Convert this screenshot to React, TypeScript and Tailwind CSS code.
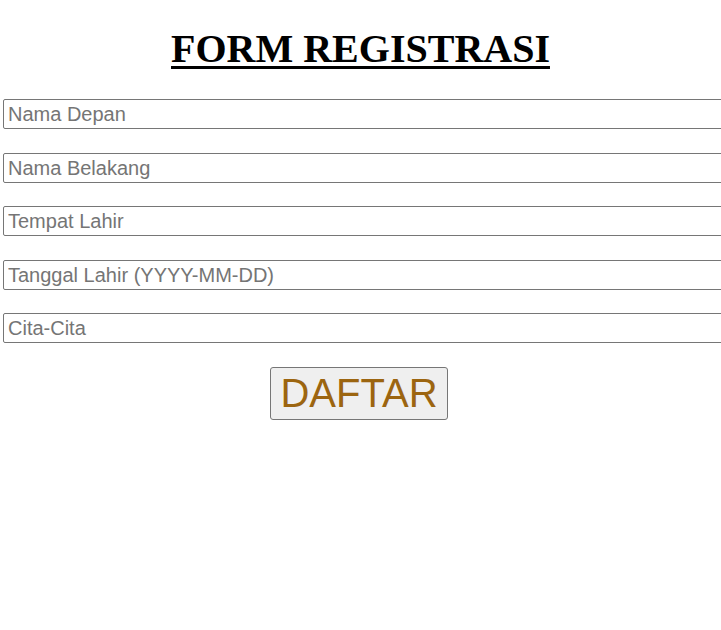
import React from "react";

export default function App() {
    const fields = ["Nama Depan", "Nama Belakang", "Tempat Lahir", "Tanggal Lahir (YYYY-MM-DD)", "Cita-Cita"];
    return (
        <main className="w-[721px] h-[630px] overflow-hidden bg-white" style={{fontFamily: '"Liberation Sans", Arial, sans-serif'}}>
            <h1 className="text-center pt-[26px] text-[40px] leading-[46px] font-bold underline decoration-[3px] underline-offset-[4px] text-black"
                style={{fontFamily: '"Liberation Serif", "Times New Roman", serif'}}>
                FORM REGISTRASI
            </h1>
            <form className="mt-[27px] flex flex-col gap-[23.5px]" onSubmit={e => e.preventDefault()}>
                {fields.map(f => (
                    <input key={f} type="text" placeholder={f}
                           className="ml-[3px] w-[760px] h-[30px] border border-[#767676] rounded-[2px] px-[4px] text-[20px] text-black placeholder:text-[#757575] outline-none"/>
                ))}
                <div className="flex justify-center pr-[3px]">
                    <button type="submit"
                            className="w-[178px] h-[53px] bg-[#efefef] border border-[#767676] rounded-[3px] text-[40px] leading-none text-[#9c6510]">
                        DAFTAR
                    </button>
                </div>
            </form>
        </main>
    );
}
